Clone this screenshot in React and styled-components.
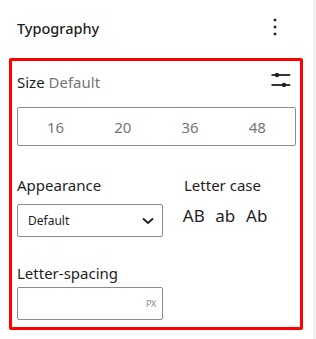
import React from "react";
import styled, { createGlobalStyle } from "styled-components";

const Global = createGlobalStyle`
  html, body { margin: 0; padding: 0; background: #fff; }
  body { font-family: "Noto Sans", "Open Sans", sans-serif; color: #1e1e1e; }
  * { box-sizing: border-box; }
`;

const Panel = styled.div`
  width: 316px;
  height: 339px;
  border-right: 3px solid #f1f1f1;
  background: #fff;
`;

const Header = styled.div`
  display: flex;
  align-items: center;
  justify-content: space-between;
  height: 53px;
  padding: 2px 28px 0 17px;
`;

const Title = styled.h2`
  margin: 0;
  font-size: 14.5px;
  font-weight: 500;
  line-height: 20px;
  color: #1e1e1e;
`;

const IconButton = styled.button`
  display: flex;
  align-items: center;
  justify-content: center;
  border: 0;
  background: none;
  padding: 0;
  width: 20px;
  height: 24px;
  color: #1e1e1e;
  margin-top: -2px;
`;

const Highlight = styled.div`
  margin: 5px 0 0 9px;
  width: 294px;
  border: 3px solid #ff0000;
  border-radius: 2px;
  padding: 11px 4px 7px 5px;
`;

const SizeRow = styled.div`
  display: flex;
  align-items: center;
  justify-content: space-between;
  height: 20px;
  font-size: 15px;
  line-height: 20px;
`;

const Muted = styled.span`
  color: #757575;
`;

const SlidersButton = styled.button`
  border: 0;
  background: none;
  padding: 0;
  display: flex;
  margin: 0 5px 4px 0;
  color: #1e1e1e;
`;

const Presets = styled.div`
  margin-top: 15px;
  height: 39px;
  border: 1px solid #8c8c8c;
  border-radius: 2px;
  padding: 0 4px;
  display: grid;
  grid-template-columns: repeat(4, 1fr);
  align-items: center;
`;

const Preset = styled.button`
  border: 0;
  background: none;
  font-family: inherit;
  font-size: 15px;
  color: #757575;
  height: 100%;
  padding: 0;
`;

const Grid = styled.div`
  display: grid;
  grid-template-columns: 146px 1fr;
  column-gap: 21px;
  margin-top: 29px;
`;

const Label = styled.div`
  font-size: 15px;
  line-height: 20px;
  color: #1e1e1e;
  margin-bottom: ${(p) => p.$gap}px;
`;

const Select = styled.div`
  height: 33px;
  border: 1px solid #8c8c8c;
  border-radius: 2px;
  display: flex;
  align-items: center;
  justify-content: space-between;
  padding: 0 8px 0 10px;
  font-size: 12px;
  color: #1e1e1e;
`;

const CaseRow = styled.div`
  display: flex;
  margin: 2px 0 0 -6px;
`;

const CaseButton = styled.button`
  width: 31.5px;
  height: 24px;
  border: 0;
  background: none;
  padding: 0;
  font-family: inherit;
  font-size: 17px;
  line-height: 24px;
  color: #1e1e1e;
  text-align: center;
`;

const Spacing = styled.div`
  margin-top: 26px;
  width: 146px;
`;

const Input = styled.div`
  height: 33px;
  border: 1px solid #8c8c8c;
  border-radius: 2px;
  display: flex;
  align-items: center;
  justify-content: flex-end;
  padding-right: 6px;
`;

const Unit = styled.span`
  font-size: 9px;
  color: #8a8a8a;
  letter-spacing: -0.3px;
`;

export default function App() {
  return (
    <>
      <Global />
      <Panel>
        <Header>
          <Title>Typography</Title>
          <IconButton aria-label="Options">
            <svg width="4" height="18" viewBox="0 0 4 18" fill="#1e1e1e">
              <rect x="0.75" y="0.75" width="2.5" height="2.5" />
              <rect x="0.75" y="7.75" width="2.5" height="2.5" />
              <rect x="0.75" y="14.75" width="2.5" height="2.5" />
            </svg>
          </IconButton>
        </Header>
        <Highlight>
          <SizeRow>
            <span>
              Size <Muted>Default</Muted>
            </span>
            <SlidersButton aria-label="Set custom size">
              <svg width="20" height="14" viewBox="0 0 20 14">
                <line x1="0.5" y1="2" x2="19.2" y2="2" stroke="#1e1e1e" strokeWidth="1.8" />
                <circle cx="6" cy="2" r="2.2" fill="#1e1e1e" />
                <line x1="0.5" y1="12" x2="19.2" y2="12" stroke="#1e1e1e" strokeWidth="1.8" />
                <circle cx="13" cy="12" r="2.2" fill="#1e1e1e" />
              </svg>
            </SlidersButton>
          </SizeRow>
          <Presets>
            {["16", "20", "36", "48"].map((v) => (
              <Preset key={v}>{v}</Preset>
            ))}
          </Presets>
          <Grid>
            <div>
              <Label $gap={9}>Appearance</Label>
              <Select>
                <span>Default</span>
                <svg width="12" height="8" viewBox="0 0 12 8">
                  <path d="M1 1.5 L6 6 L11 1.5" fill="none" stroke="#1e1e1e" strokeWidth="1.8" />
                </svg>
              </Select>
            </div>
            <div>
              <Label $gap={9}>Letter case</Label>
              <CaseRow>
                <CaseButton>AB</CaseButton>
                <CaseButton>ab</CaseButton>
                <CaseButton>Ab</CaseButton>
              </CaseRow>
            </div>
          </Grid>
          <Spacing>
            <Label $gap={4}>Letter-spacing</Label>
            <Input>
              <Unit>PX</Unit>
            </Input>
          </Spacing>
        </Highlight>
      </Panel>
    </>
  );
}
